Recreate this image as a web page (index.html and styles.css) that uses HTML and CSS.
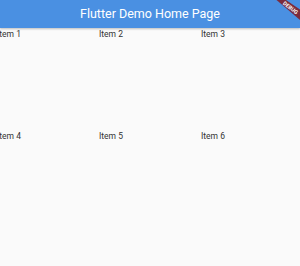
FILE: index.html
```html
<!DOCTYPE html>
<html>
<head>
<meta charset="utf-8">
<link rel="stylesheet" href="styles.css">
</head>
<body>
<div class="app">
  <header class="appbar">
    <h1 class="title">Flutter Demo Home Page</h1>
  </header>
  <main class="grid">
    <div class="cell">Item 1</div>
    <div class="cell">Item 2</div>
    <div class="cell">Item 3</div>
    <div class="cell">Item 4</div>
    <div class="cell">Item 5</div>
    <div class="cell">Item 6</div>
  </main>
  <svg class="banner" width="26" height="24" viewBox="274 0 26 24">
    <polygon points="276.5,0 286,0 300,9.5 300,20" fill="#7b2b3d"/>
    <text x="290.5" y="9.6" transform="rotate(37 290.5 7.7)" text-anchor="middle" class="banner-text">DEBUG</text>
  </svg>
</div>
</body>
</html>
```
FILE: styles.css
```css
html, body {
  margin: 0;
  padding: 0;
  background: #fafafa;
}
.app {
  position: relative;
  width: 300px;
  height: 266px;
  overflow: hidden;
  font-family: Roboto, "Liberation Sans", sans-serif;
}
.appbar {
  position: relative;
  z-index: 1;
  height: 28px;
  background: #4a90e2;
  display: flex;
  align-items: center;
  justify-content: center;
  box-shadow: 0 1px 2px rgba(0,0,0,0.25);
}
.title {
  margin: 0;
  color: #fff;
  font-size: 12.5px;
  font-weight: 400;
  line-height: 1;
}
.grid {
  display: grid;
  grid-template-columns: repeat(3, 102px);
  grid-auto-rows: 102px;
  margin-left: -3px;
  padding-top: 1px;
}
.cell {
  font-size: 8.5px;
  line-height: 10px;
  color: #333;
}
.banner {
  position: absolute;
  top: 0;
  right: 0;
  z-index: 2;
}
.banner-text {
  fill: #fff;
  font-family: Roboto, "Liberation Sans", sans-serif;
  font-size: 5.4px;
  font-weight: 700;
}
```
